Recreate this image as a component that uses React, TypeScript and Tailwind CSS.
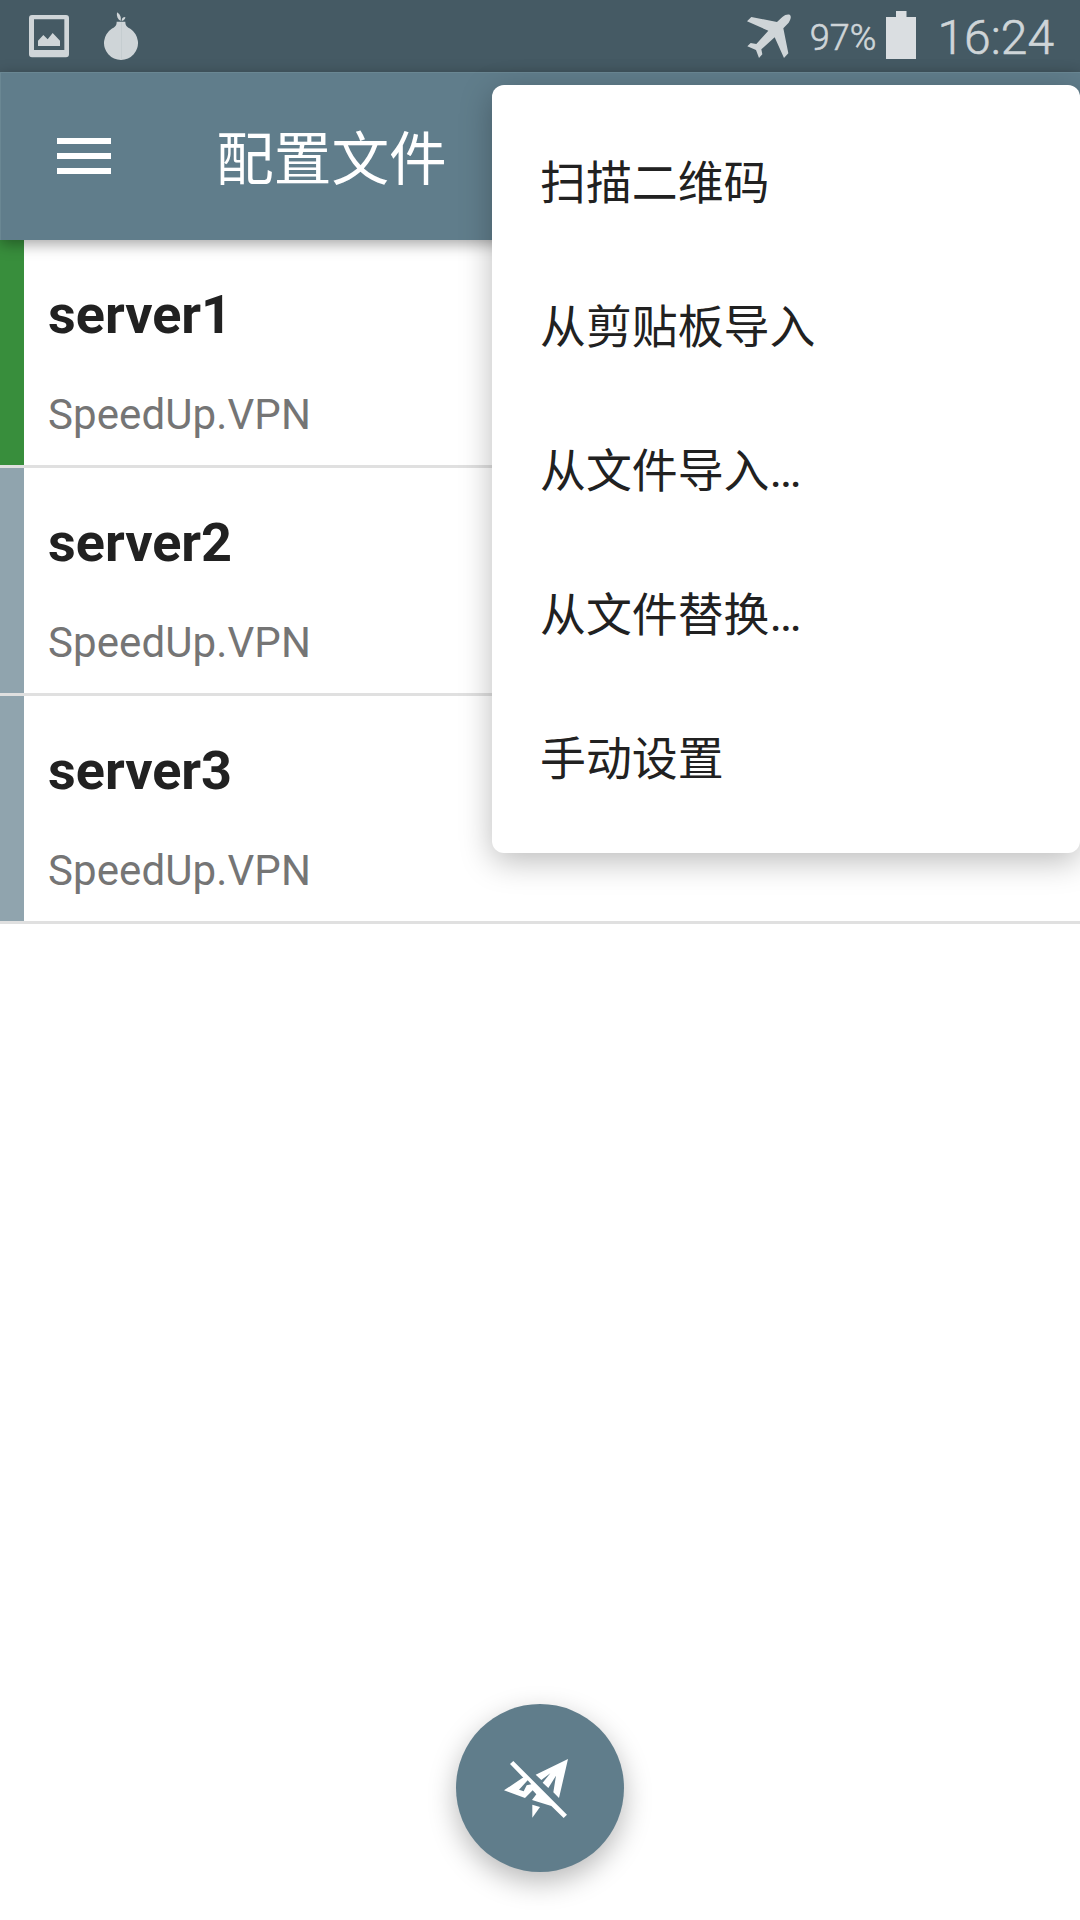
const servers = [
  { name: "server1", provider: "SpeedUp.VPN", active: true },
  { name: "server2", provider: "SpeedUp.VPN", active: false },
  { name: "server3", provider: "SpeedUp.VPN", active: false },
];

const menuItems = [
  { label: "扫描二维码", more: false },
  { label: "从剪贴板导入", more: false },
  { label: "从文件导入", more: true },
  { label: "从文件替换", more: true },
  { label: "手动设置", more: false },
];

function PictureIcon() {
  return (
    <svg className="h-[43px] w-[40px]" viewBox="87 44 120 129" fill="#cfd5d8">
      <path
        fillRule="evenodd"
        d="M96 44h102a9 9 0 0 1 9 9v109a9 9 0 0 1-9 9H96a9 9 0 0 1-9-9V53a9 9 0 0 1 9-9ZM102 57v92h91V57Z"
      />
      <path d="M114 137v-16l16-17 13 13 15-19 22 23v16Z" />
    </svg>
  );
}

function OnionIcon() {
  return (
    <svg className="h-[48px] w-[34px]" viewBox="312 37 102 144" fill="#cfd5d8">
      <path d="M350 66h26c0 13 6 16 16 22a51 51 0 1 1-58 0c10-6 16-9 16-22Z" />
      <path d="M351 38c11 7 13 16 11 26-9-5-13-14-11-26ZM365 64c0-8 3-12 11-12 0 6-4 11-11 12Z" />
      <path d="M364.500 68v110" stroke="#c0c8cc" strokeWidth="2" />
    </svg>
  );
}

function PlaneIcon() {
  return (
    <svg className="h-[45px] w-[45px]" viewBox="80 42 135 135" fill="#cfd5d8">
      <path d="M170 66 186 51C194 44 204 42 209 45C213 49 212 57 205 68L189 85L204 160L191 174L163 112L123 148L126 163L116 174L107 150L81 139L91 129L108 132L144 92L80 64L93 51Z" />
    </svg>
  );
}

function BatteryIcon() {
  return (
    <svg className="h-[48px] w-[30px]" viewBox="0 0 30 48" fill="#dadee1">
      <path d="M10 0h10.500v6H30v42H0V6h10Z" />
    </svg>
  );
}

function DisconnectedIcon() {
  return (
    <svg className="h-[60px] w-[64px]" viewBox="192 234 192 180" fill="#fff">
      <path d="M384 237 357 354 340 337 348 287 325 324 308 308 331 280 304 300 287 284Z" />
      <path d="M220 243 381 404 371 414 334 378 276 360 289 343 278 331 255 354 192 331 247 294 250 293 210 252ZM263 301 237 329 251 334 260 316 274 313Z" fillRule="evenodd" />
      <path d="M277 374 300 381 277 413Z" />
    </svg>
  );
}

function StatusBar() {
  return (
    <header className="flex h-[72px] items-start justify-between bg-[#455a64] text-[#cfd5d8]">
      <div className="flex pl-[29px] pt-[12px]">
        <div className="pt-[3px]">
          <PictureIcon />
        </div>
        <div className="ml-[35px]">
          <OnionIcon />
        </div>
      </div>
      <div className="flex pr-[25px]">
        <div className="pt-[14px]">
          <PlaneIcon />
        </div>
        <span className="ml-[18px] mt-[17px] text-[36px] font-light leading-[42px] [-webkit-text-stroke:0.6px_#cfd5d8]">97%</span>
        <div className="ml-[10px] pt-[11px]">
          <BatteryIcon />
        </div>
        <span className="ml-[21px] mr-px mt-[10px] text-[48px] font-light leading-[56px] [-webkit-text-stroke:0.6px_#cfd5d8]">16:24</span>
      </div>
    </header>
  );
}

function Toolbar() {
  return (
    <div className="relative z-10 flex h-[168px] items-start border-l border-t border-[#6a8793] bg-[#607d8b] shadow-[0_4px_14px_rgba(0,0,0,0.36)]">
      <button className="ml-[56px] mt-[65px] flex flex-col gap-[9px]" aria-label="菜单">
        <span className="h-[6px] w-[54px] bg-white" />
        <span className="h-[6px] w-[54px] bg-white" />
        <span className="h-[6px] w-[54px] bg-white" />
      </button>
      <h1 className="ml-[105px] mt-[47px] text-[57.700px] font-normal leading-[80px] text-white">配置文件</h1>
    </div>
  );
}

export default function App() {
  return (
    <div className="relative flex h-[1920px] w-[1080px] flex-col overflow-hidden bg-white font-['Roboto','Noto_Sans_CJK_SC',sans-serif]">
      <StatusBar />
      <Toolbar />
      <ul>
        {servers.map((s) => (
          <li key={s.name} className="flex h-[228px] border-b-[3px] border-[#e0e0e0]">
            <div className={s.active ? "w-[24px] bg-[#388e3c]" : "w-[24px] bg-[#90a4ae]"} />
            <div className="flex flex-col pl-[24px] pt-[43px]">
              <span className="text-[54px] font-bold leading-[64px] text-[#212121]">{s.name}</span>
              <span className="mt-[43px] text-[42px] leading-[50px] tracking-[0.1px] text-[#757575]">{s.provider}</span>
            </div>
          </li>
        ))}
      </ul>

      <div className="absolute right-0 top-[85px] z-20 flex w-[588px] flex-col rounded-[12px] bg-white pb-[22px] pt-[26px] shadow-[0_8px_32px_rgba(0,0,0,0.27)]">
        {menuItems.map((item) => (
          <button key={item.label} className="flex h-[144px] items-center pl-[48px] text-[45.900px] leading-[60px] text-[#212121]">
            <span>
              {item.label}
              {item.more && <span className="text-[48px]">…</span>}
            </span>
          </button>
        ))}
      </div>

      <button
        className="absolute left-[456px] top-[1704px] flex size-[168px] items-center justify-center rounded-full bg-[#607d8b] pr-[8px] shadow-[0_10px_28px_rgba(0,0,0,0.28)]"
        aria-label="连接"
      >
        <DisconnectedIcon />
      </button>
    </div>
  );
}
